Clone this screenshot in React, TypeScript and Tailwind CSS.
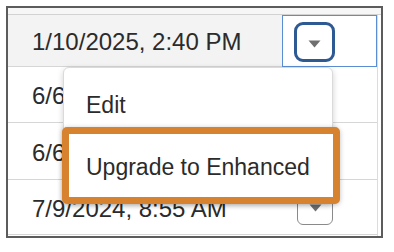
import React from "react";

const rows = [
  { date: "1/10/2025, 2:40 PM", height: "h-[52px]", selected: true },
  { date: "6/6/2024, 11:05 AM", height: "h-[56px]" },
  { date: "6/6/2024, 10:48 AM", height: "h-[57px]" },
  { date: "7/9/2024, 8:55 AM", height: "h-[55px]", button: true },
];

function Caret() {
  return (
    <svg width="13" height="8" viewBox="0 0 13 8">
      <path d="M0.5 0.5 L12.5 0.5 L6.5 7.5 Z" fill="#6f6f6f" />
    </svg>
  );
}

export default function App() {
  return (
    <div className="relative w-[394px] h-[252px] bg-white font-['Liberation_Sans',Arial,sans-serif] text-[#2b2b2b]">
      <div className="absolute left-[6px] top-[6px] w-[377px] h-[232px] border-2 border-[#5c5c5c] flex flex-col">
        <div className="h-[7px] shrink-0 bg-[#f6f6f6] border-b border-[#d2d2d2]" />
        <div className="flex flex-1">
          <div className="w-[369px] flex flex-col">
            {rows.map((r, i) => (
              <div
                key={i}
                className={`${r.height} shrink-0 flex border-b border-[#d6d6d6] ${
                  r.selected ? "bg-[#f3f3f3]" : "bg-white"
                }`}
              >
                <div className="w-[274px] flex items-center pl-[24px] pt-[3px] text-[24px] whitespace-nowrap overflow-hidden">
                  {r.date}
                </div>
                {r.selected ? (
                  <div className="w-[95px] -mb-px border border-[#5a8ed4] bg-white flex items-center pl-[11px] pt-[2px]">
                    <div className="w-[41px] h-[40px] rounded-[9px] border-[3px] border-[#2d5a93] bg-white flex items-center justify-center pt-[3px]">
                      <Caret />
                    </div>
                  </div>
                ) : (
                  <div className="w-[95px] flex items-center pl-[15px] pt-[1px]">
                    {r.button && (
                      <div className="w-[36px] h-[34px] rounded-[6px] border border-[#8a8a8a] bg-white flex items-center justify-center">
                        <Caret />
                      </div>
                    )}
                  </div>
                )}
              </div>
            ))}
          </div>
          <div className="w-[4px] border-l border-[#dcdcdc] bg-white" />
        </div>
      </div>

      <div className="absolute left-[63px] top-[67px] w-[270px] h-[136px] bg-white border border-[#dadada] rounded-[6px] shadow-[0_2px_6px_rgba(0,0,0,0.18)] pt-[23px] pl-[22px] text-[23px]">
        <div className="h-[28px] leading-[28px]">Edit</div>
      </div>

      <div className="absolute left-[62px] top-[127px] w-[278px] h-[77px] bg-white border-[7px] border-[#d6822e] rounded-[5px] shadow-[0_1px_5px_rgba(0,0,0,0.25)] flex items-center pl-[17px] pt-[4px] text-[23px] whitespace-nowrap">
        Upgrade to Enhanced
      </div>
    </div>
  );
}
